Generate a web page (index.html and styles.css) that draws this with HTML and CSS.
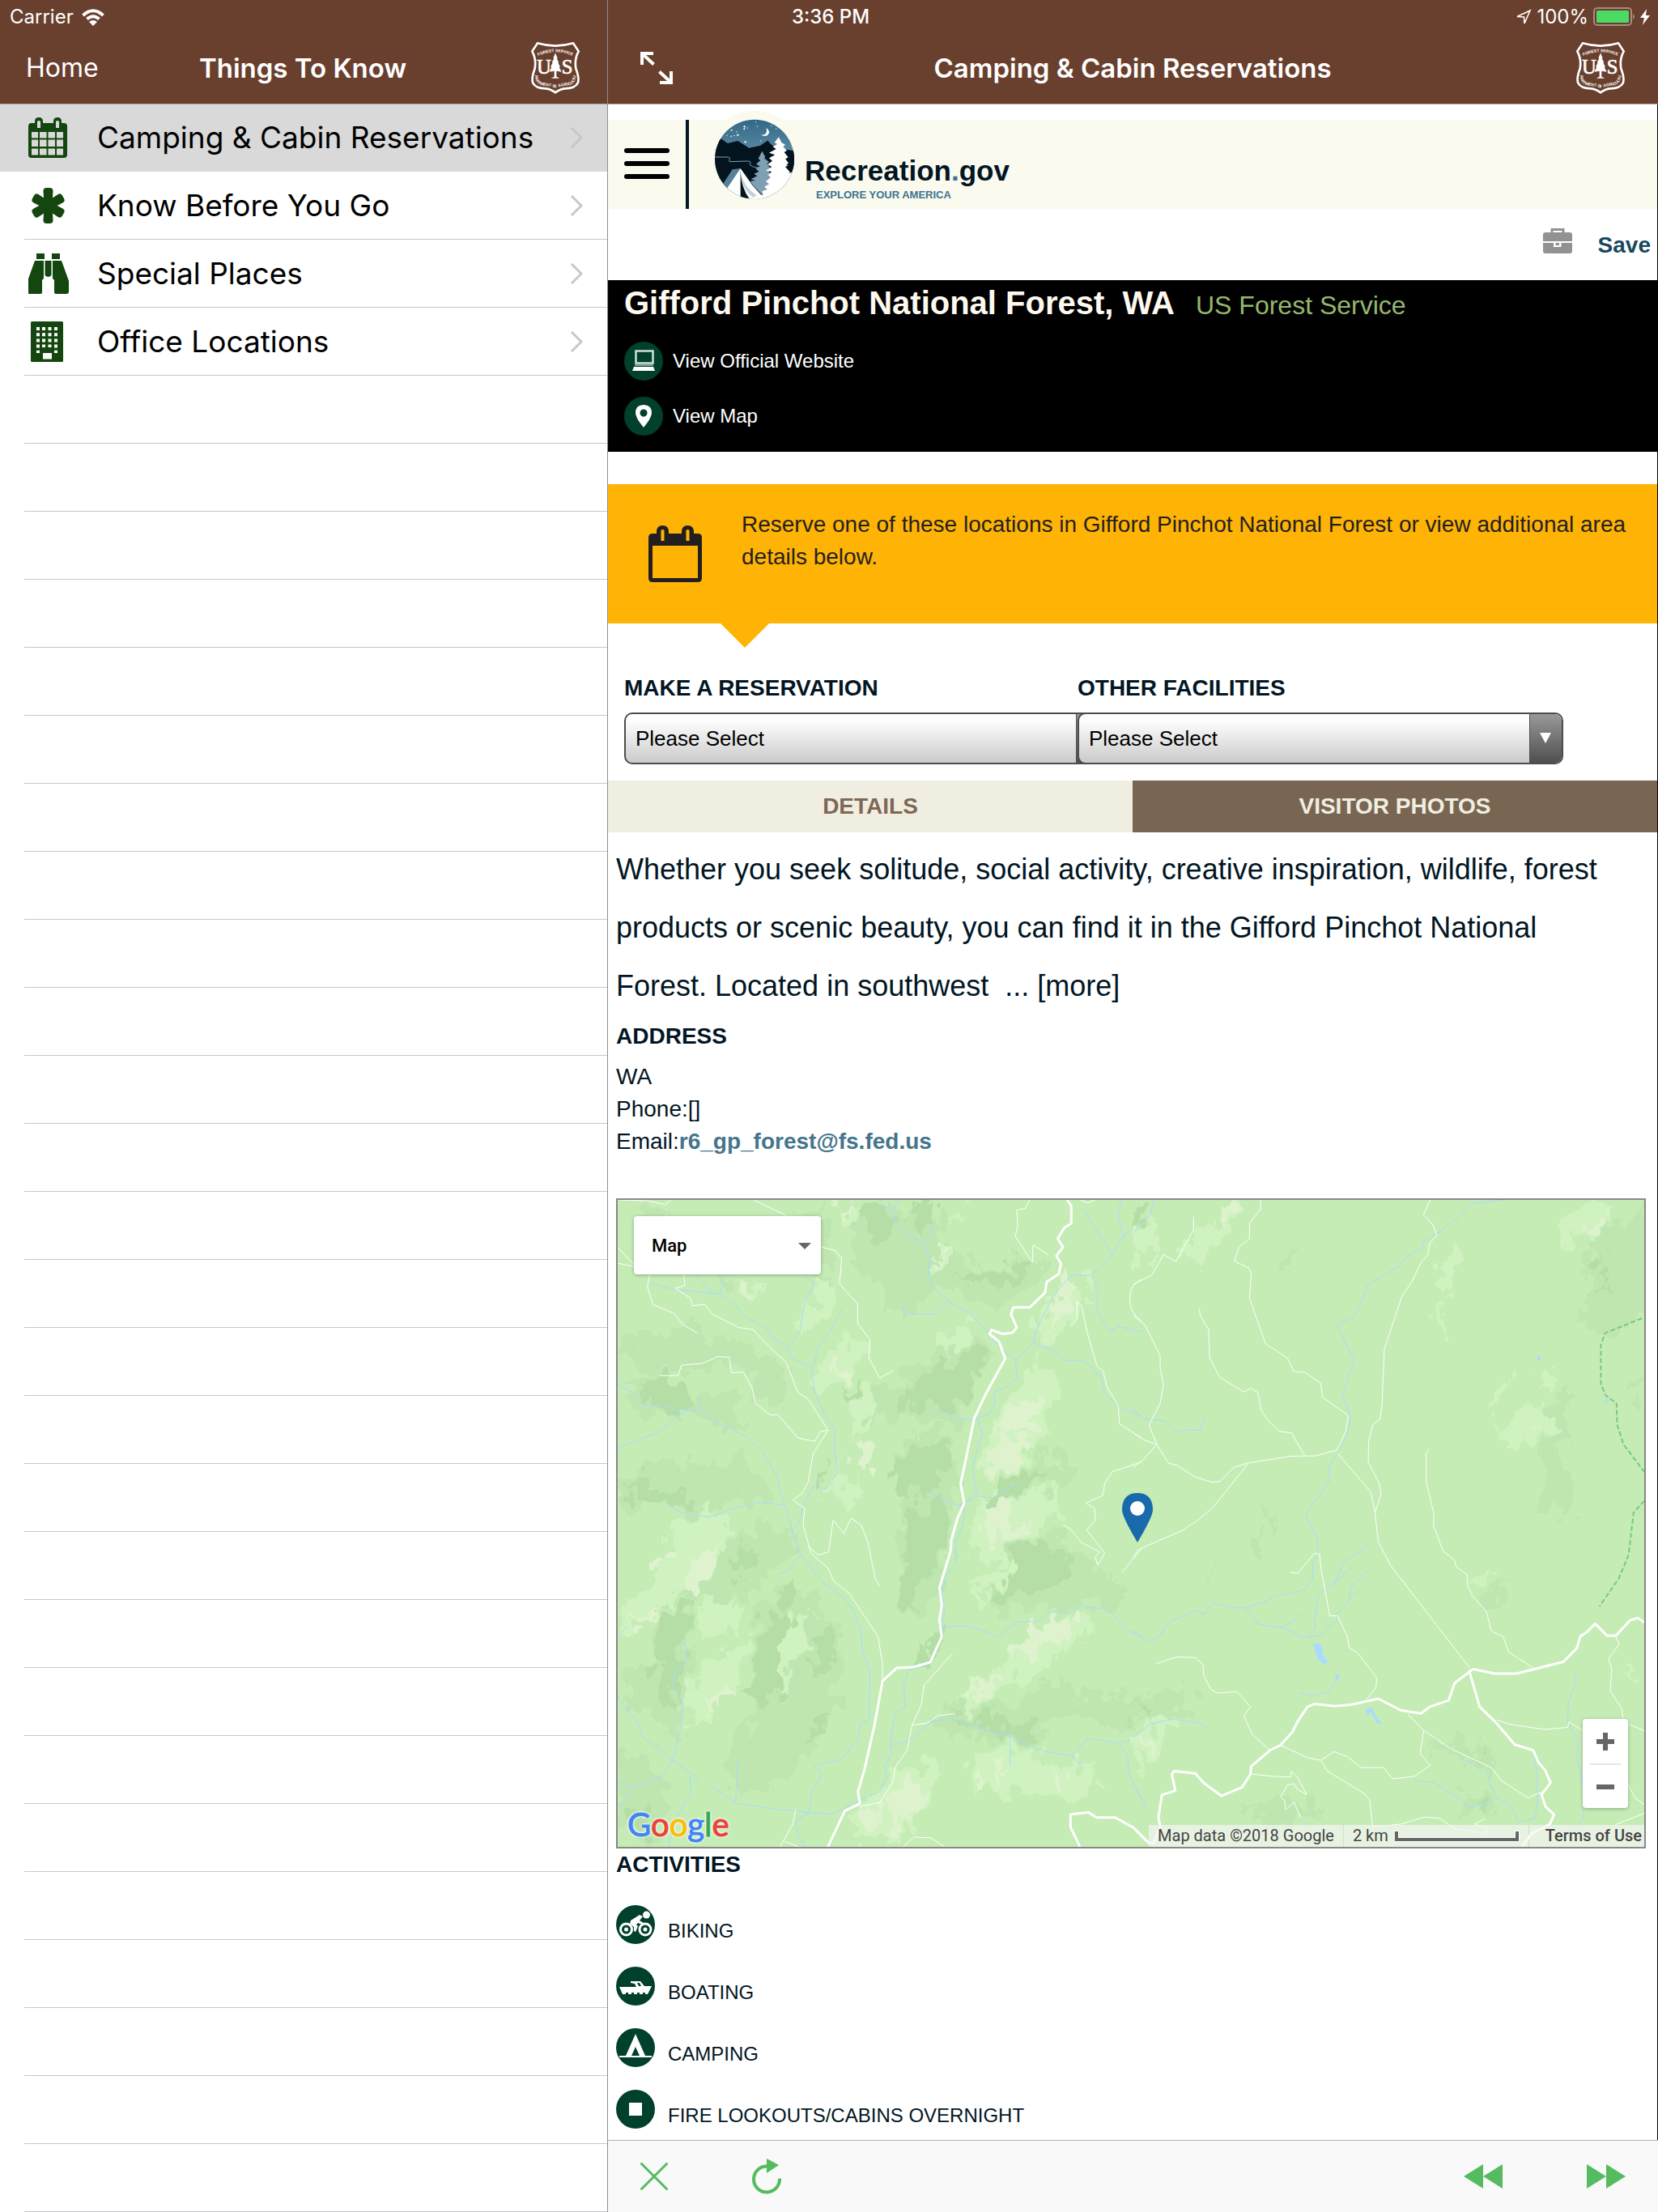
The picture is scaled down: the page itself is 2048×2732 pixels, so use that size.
FILE: index.html
```html
<!DOCTYPE html>
<html lang="en">
<head>
<meta charset="utf-8">
<meta name="viewport" content="width=device-width, initial-scale=1">
<title>Camping &amp; Cabin Reservations</title>
<link rel="stylesheet" href="styles.css">
</head>
<body>
<svg class="defs" width="0" height="0" aria-hidden="true">
  <defs>
    <symbol id="shield" viewBox="30 24 180 192">
      <path d="M54 28 Q120 48 186 28 L206 58 Q190 88 196 122 Q210 158 203 176 Q192 196 156 196 Q136 198 120 211 Q104 198 84 196 Q48 196 37 176 Q30 158 44 122 Q50 88 34 58 Z" fill="none" stroke="#fff" stroke-width="8"/>
      <path id="arc-top" d="M56 75 Q120 46 184 75" fill="none"/>
      <path id="arc-bottom" d="M44 146 Q44 182 78 185 Q106 188 120 194 Q134 188 162 185 Q196 182 196 146" fill="none"/>
      <text class="shield-small"><textPath href="#arc-top" startOffset="50%" text-anchor="middle">FOREST SERVICE</textPath></text>
      <text class="shield-small"><textPath href="#arc-bottom" startOffset="50%" text-anchor="middle">DEPARTMENT OF AGRICULTURE</textPath></text>
      <text class="shield-big" x="78" y="142" text-anchor="middle">U</text>
      <text class="shield-big" x="164" y="142" text-anchor="middle">S</text>
      <path d="M120 64 L128 84 L125 84 L133 100 L130 100 L138 116 L134 116 L143 134 L124 131 L124 152 L136 158 L104 158 L116 152 L116 131 L97 134 L106 116 L102 116 L110 100 L107 100 L115 84 L112 84 Z" fill="#fff"/>
    </symbol>
  </defs>
</svg>

<div class="app">
  <div class="status">
    <div class="status-left">
      <span>Carrier</span>
      <svg width="28" height="21" viewBox="0 0 28 21" fill="none" stroke="#fff" stroke-width="4"><path d="M1.500 8 Q14 -3.500 26.500 8"/><path d="M6.500 12.500 Q14 6 21.500 12.500"/><path d="M14 21 L9 16 Q14 12 19 16 Z" fill="#fff" stroke="none"/></svg>
    </div>
    <span class="clock">3:36 PM</span>
    <div class="status-right">
      <svg width="20" height="20" viewBox="0 0 20 20" fill="none" stroke="#fff" stroke-width="1.600"><path d="M18 2 L2 9.500 L10.500 10 L11 18 Z"/></svg>
      <span class="percent">100%</span>
      <svg width="52" height="24" viewBox="0 0 52 24"><rect x="1" y="1" width="46" height="21" rx="4" fill="none" stroke="#a68c82" stroke-width="2"/><rect x="4" y="4" width="40" height="15" rx="1.500" fill="#4cd964"/><path d="M49 8 Q53 11.500 49 15 Z" fill="#a68c82"/></svg>
      <svg width="12" height="20" viewBox="0 0 12 20"><path d="M8 0 L0 11 L5 11 L3 20 L12 8 L7 8 Z" fill="#fff"/></svg>
    </div>
  </div>

  <aside class="side">
    <header class="nav">
      <a class="nav-link" href="#home">Home</a>
      <h1 class="nav-title">Things To Know</h1>
      <svg class="nav-shield" role="img" aria-label="US Forest Service"><use href="#shield"/></svg>
    </header>
    <ul class="menu">
      <li class="menu-item is-current"><a class="menu-link" href="#camping">
        <svg class="menu-icon" viewBox="0 0 50 50"><path fill="#14460f" fill-rule="evenodd" d="M3 7 h5 v-2 q0-5 5-5 t5 5 v2 h13 v-2 q0-5 5-5 t5 5 v2 h3 q4 0 4 4 v35 q0 4-4 4 h-40 q-4 0-4-4 v-35 q0-4 4-4z M4 18 v7.500 h8 v-7.500z m10 0 v7.500 h8.500 v-7.500z m10.500 0 v7.500 h8.500 v-7.500z m10.500 0 v7.500 h8 v-7.500z M4 27.500 v8.500 h8 v-8.500z m10 0 v8.500 h8.500 v-8.500z m10.500 0 v8.500 h8.500 v-8.500z m10.500 0 v8.500 h8 v-8.500z M4 38.500 v8 h8 v-8z m10 0 v8 h8.500 v-8z m10.500 0 v8 h8.500 v-8z m10.500 0 v8 h8 v-8z M11 5 v8 h4 v-8 q-2-2-4 0z m23 0 v8 h4 v-8 q-2-2-4 0z"/></svg>
        <span class="menu-text">Camping &amp; Cabin Reservations</span>
        <svg class="chevron" viewBox="0 0 16 26"><path d="M2 1 L14 13 L2 25"/></svg></a></li>
      <li class="menu-item"><a class="menu-link" href="#know">
        <svg class="menu-icon" viewBox="0 0 50 50"><g stroke="#14460f" stroke-width="8" stroke-linejoin="round" fill="#14460f"><path d="M22.500 7 H26.500 L25.500 24 H23.500Z M22.500 43 H26.500 L25.500 26 H23.500Z"/><path d="M8.500 18 L10.500 14.500 L25 24 L24 26Z M40.500 18 L38.500 14.500 L24 24 L25 26Z M8.500 32 L10.500 35.500 L25 26 L24 24Z M40.500 32 L38.500 35.500 L24 26 L25 24Z"/></g></svg>
        <span class="menu-text">Know Before You Go</span>
        <svg class="chevron" viewBox="0 0 16 26"><path d="M2 1 L14 13 L2 25"/></svg></a></li>
      <li class="menu-item"><a class="menu-link" href="#places">
        <svg class="menu-icon" viewBox="0 0 50 50"><path fill="#14460f" d="M10 0 h10 v7 h-10z M29 0 h10 v7 h-10z M8 9 h11 v22 l-2 2 v15 q0 2-2 2 h-13 q-3 0-3-3 v-13z M30 9 h11 l9 25 v13 q0 3-3 3 h-13 q-2 0-2-2 v-15 l-2-2z M20.500 9 h8 v18 q-4 4-8 0z"/></svg>
        <span class="menu-text">Special Places</span>
        <svg class="chevron" viewBox="0 0 16 26"><path d="M2 1 L14 13 L2 25"/></svg></a></li>
      <li class="menu-item"><a class="menu-link" href="#offices">
        <svg class="menu-icon" viewBox="0 0 50 50"><rect x="3" y="0" width="40" height="50" rx="1.500" fill="#14460f"/><g stroke="#fff" stroke-width="4" stroke-dasharray="4 3.200"><path d="M12 7 V39" /><path d="M19 7 V32"/><path d="M26.500 7 V32"/><path d="M34 7 V39"/></g><rect x="18" y="39" width="11" height="7.500" fill="#fff"/></svg>
        <span class="menu-text">Office Locations</span>
        <svg class="chevron" viewBox="0 0 16 26"><path d="M2 1 L14 13 L2 25"/></svg></a></li>
    </ul>
    <div class="menu-rest"></div>
  </aside>

  <section class="detail">
    <header class="nav">
      <button class="icon-button expand" type="button" aria-label="Full screen">
        <svg width="40" height="40" viewBox="0 0 40 40" fill="none" stroke="#fff" stroke-width="4"><path d="M16 2 H2 V16 M3 3 L16.500 15.500"/><path d="M24 38 H38 V24 M37 37 L23.500 24.500"/></svg>
      </button>
      <h2 class="nav-title">Camping &amp; Cabin Reservations</h2>
      <svg class="nav-shield" role="img" aria-label="US Forest Service"><use href="#shield"/></svg>
    </header>

    <main class="page">
      <div class="brand-bar">
        <button class="icon-button burger" type="button" aria-label="Menu">
          <svg width="56" height="40" viewBox="0 0 56 40" stroke="#000" stroke-width="6" stroke-linecap="round"><path d="M3 3 H53 M3 19 H53 M3 35 H53"/></svg>
        </button>
        <a class="brand" href="#recreation">
          <svg class="brand-mark" viewBox="0 0 372 372" aria-hidden="true">
            <defs>
              <clipPath id="disc"><circle cx="186" cy="194" r="147"/></clipPath>
              <linearGradient id="sky" x1="0" y1="0" x2="0" y2="1"><stop offset="0" stop-color="#2f6687"/><stop offset="1" stop-color="#5f8ca4"/></linearGradient>
            </defs>
            <circle cx="186" cy="194" r="180" fill="#fafaee"/>
            <g clip-path="url(#disc)">
              <rect x="36" y="44" width="300" height="130" fill="url(#sky)"/>
              <path d="M36 140 L62 118 L86 135 L124 126 L166 152 L208 143 L234 125 L260 150 L340 165 V345 H36 Z" fill="#04141f"/>
              <path d="M70 284 L104 232 L134 228 L110 300 L84 305Z" fill="#55819a"/>
              <path d="M36 186 H90 Q100 189 92 196 L94 203 L160 201 Q178 202 168 212 Q172 222 200 226" fill="none" stroke="#7da0b4" stroke-width="3"/>
              <path d="M214 164 L226 186 L222 190 L240 205 L232 210 L246 230 L238 236 L250 262 L240 300 L216 328 L180 290 L170 275 L190 272 L172 268 L196 256 L184 248 L202 240 L190 228 L206 220 L192 212 L208 198 L200 192 Z" fill="#7f9fb2"/>
              <path d="M276 112 L286 132 L300 140 L292 148 L306 162 L296 168 L312 188 L300 192 L316 214 L300 222 L318 242 L345 250 V350 H140 L180 326 L218 326 L214 312 L234 306 L222 296 L240 286 L228 276 L246 262 L236 252 L250 240 L228 236 L250 222 L234 214 L252 200 L240 190 L262 178 L240 170 L266 156 L254 148 L270 138 L260 132 Z" fill="#fff"/>
              <path d="M310 160 L340 165 V215 L314 248 L322 222 L304 214 L316 206 L306 190 L318 182Z" fill="#04141f"/>
              <path d="M84 302 L134 228 L178 290 L212 328 V350 H90 Z" fill="#fff"/>
              <path d="M134 234 V336 L168 342 Q136 300 134 234Z" fill="#04141f"/>
              <path d="M136 250 Q142 310 182 336 L194 328 Q150 300 136 250Z" fill="#c3d2da"/>
              <path d="M230 78 Q248 92 234 105 Q224 112 210 104 Q236 106 230 78Z" fill="#fff"/>
              <g fill="#fff"><circle cx="149" cy="73" r="3.500"/><circle cx="148" cy="82" r="3"/><circle cx="160" cy="78" r="2"/><circle cx="101" cy="86" r="3"/><circle cx="120" cy="92" r="2"/><circle cx="124" cy="104" r="3.500"/><circle cx="111" cy="106" r="2"/><circle cx="100" cy="109" r="2.500"/><circle cx="84" cy="106" r="2"/><circle cx="152" cy="130" r="3.500"/><circle cx="191" cy="55" r="2"/><circle cx="209" cy="126" r="2"/><circle cx="196" cy="72" r="2"/><circle cx="266" cy="82" r="2"/><circle cx="248" cy="70" r="2"/></g>
            </g>
          </svg>
          <span class="brand-words">
            <span class="brand-name">Recreation<span class="brand-dot">.</span>gov</span>
            <span class="brand-tag">EXPLORE YOUR AMERICA</span>
          </span>
        </a>
      </div>

      <div class="save-row">
        <svg class="briefcase" viewBox="0 0 36 31" aria-hidden="true"><path d="M11 6 V1.500 H25 V6" fill="none" stroke="#929292" stroke-width="3"/><path d="M3 5 H33 Q36 5 36 8 V16 H0 V8 Q0 5 3 5Z M0 18 H13 V23 H22.500 V18 H36 V28 Q36 31 33 31 H3 Q0 31 0 28Z M15.500 18 H20 V21 H15.500Z" fill="#929292"/></svg>
        <a class="save" href="#save">Save</a>
      </div>

      <div class="facility">
        <div class="facility-head">
          <h3 class="facility-name">Gifford Pinchot National Forest, WA</h3>
          <span class="facility-org">US Forest Service</span>
        </div>
        <a class="facility-link" href="#website">
          <svg class="round-icon" viewBox="0 0 48 48"><circle cx="24" cy="24" r="24" fill="#00402c"/><rect x="14.500" y="11.500" width="21" height="15" fill="none" stroke="#cfe0d8" stroke-width="2.500"/><path d="M13 28 H36 V30 H13Z" fill="#7fa395"/><path d="M12 31 H36 L38 36 H10Z" fill="#fff"/></svg>
          View Official Website</a>
        <a class="facility-link" href="#map">
          <svg class="round-icon" viewBox="0 0 48 48"><circle cx="24" cy="24" r="24" fill="#00402c"/><path fill="#fff" fill-rule="evenodd" d="M24 10 Q34 10 34 20 Q34 26 24 38 Q14 26 14 20 Q14 10 24 10Z M24 15.500 a4.500 4.500 0 1 0 .01 0Z"/></svg>
          View Map</a>
      </div>

      <div class="notice">
        <svg width="66" height="70" viewBox="0 0 66 70" aria-hidden="true"><path fill="#231f20" fill-rule="evenodd" d="M5 10 H10 V8 Q10 0 17.500 0 T25 8 V10 H41 V8 Q41 0 48.500 0 T56 8 V10 H61 Q66 10 66 15 V65 Q66 70 61 70 H5 Q0 70 0 65 V15 Q0 10 5 10Z M5 25 V65 H61 V25Z M15.500 6 V19 H19.500 V6 Q17.500 4 15.500 6Z M46.500 6 V19 H50.500 V6 Q48.500 4 46.500 6Z"/></svg>
        <p class="notice-text">Reserve one of these locations in Gifford Pinchot National Forest or view additional area details below.</p>
      </div>

      <form class="pickers">
        <div class="picker">
          <label class="heading" for="reservation">MAKE A RESERVATION</label>
          <div class="select-box"><select id="reservation"><option>Please Select</option></select></div>
        </div>
        <div class="picker">
          <label class="heading" for="facilities">OTHER FACILITIES</label>
          <div class="select-box"><select id="facilities"><option>Please Select</option></select></div>
        </div>
      </form>

      <div class="tabs">
        <button class="tab is-active" type="button">DETAILS</button>
        <button class="tab" type="button">VISITOR PHOTOS</button>
      </div>

      <div class="body">
        <p class="about">Whether you seek solitude, social activity, creative inspiration, wildlife, forest products or scenic beauty, you can find it in the Gifford Pinchot National Forest. Located in southwest&nbsp; ... <a href="#more">[more]</a></p>
        <h4 class="heading section">ADDRESS</h4>
        <address class="address">WA<br>Phone:[]<br>Email:<a class="mail" href="mailto:r6_gp_forest@fs.fed.us">r6_gp_forest@fs.fed.us</a></address>

        <div class="map">
          <svg class="map-art" viewBox="0 0 1268 799" preserveAspectRatio="xMidYMid slice" role="img" aria-label="Map of the forest">
            <defs>
              <!-- breaks the contour edges up like real relief shading -->
              <filter id="relief" x="-5%" y="-5%" width="110%" height="110%" color-interpolation-filters="sRGB">
                <feTurbulence type="fractalNoise" baseFrequency="0.022" numOctaves="3" seed="7" result="noise"/>
                <feDisplacementMap in="SourceGraphic" in2="noise" scale="110" xChannelSelector="R" yChannelSelector="G"/>
              </filter>
            </defs>
            <rect width="1268" height="799" fill="#c5ecb5"/>
            <!-- west half -->
            <g transform="translate(-13 -22) scale(.4209 .5357)">
              <g fill="#bfe6b0" filter="url(#relief)">
                <path d="M735 50 L840 60 L960 60 L1000 90 L990 160 L1080 190 L1060 240 L960 250 L900 300 L820 290 L800 230 L740 200 L700 140Z"/>
                <path d="M960 400 L1090 350 L1130 400 L1080 470 L1020 560 L930 560 L850 530 L760 560 L740 510 L860 460Z"/>
                <path d="M840 640 L900 590 L1020 570 L1040 640 L1020 760 L1000 860 L960 960 L910 1010 L860 990 L850 860 L870 740Z"/>
                <path d="M31 360 L180 350 L260 330 L380 370 L500 420 L540 500 L470 520 L400 430 L300 420 L200 450 L80 430Z"/>
                <path d="M31 470 L120 440 L220 480 L380 490 L410 560 L330 560 L220 520 L100 540Z"/>
                <path d="M60 680 L180 640 L280 650 L400 640 L460 680 L500 720 L380 750 L240 770 L140 740 L31 760 L31 700Z"/>
                <path d="M360 830 L450 780 L540 810 L560 850 L480 900 L420 960 L330 970 L230 950 L140 990 L140 940 L260 880Z"/>
                <path d="M130 1010 L240 960 L250 1100 L220 1200 L210 1290 L130 1240 L60 1200 L40 1130 L140 1100Z"/>
                <path d="M440 980 L560 920 L620 980 L690 1040 L690 1130 L650 1250 L600 1330 L480 1400 L380 1410 L340 1330 L420 1240Z"/>
                <path d="M1130 900 L1200 830 L1300 810 L1390 850 L1440 900 L1530 930 L1500 970 L1330 980 L1220 990 L1120 980Z"/>
                <path d="M930 1250 L1030 1210 L1190 1200 L1290 1150 L1420 1180 L1530 1180 L1568 1230 L1500 1260 L1340 1230 L1260 1300 L1120 1280 L1000 1270Z"/>
                <path d="M31 1300 L120 1350 L180 1410 L160 1500 L90 1530 L31 1480Z"/>
                <path d="M560 60 L640 45 L660 150 L640 230 L600 200Z"/>
                <path d="M1020 180 L1150 190 L1260 170 L1290 210 L1210 260 L1120 290 L1030 250Z"/>
                <path d="M1120 720 L1200 670 L1280 620 L1340 640 L1390 660 L1360 700 L1230 700 L1150 760Z"/>
                <path d="M80 60 L160 50 L200 90 L120 110Z M430 130 L500 100 L540 150 L470 190Z M310 200 L380 230 L340 260Z"/>
              </g>
              <g fill="#cff2c0" filter="url(#relief)">
                <path d="M600 440 L700 360 L760 370 L740 430 L680 480 L640 490Z"/>
                <path d="M730 500 L800 470 L780 540 L700 600 L690 700 L760 690 L720 740 L640 720 L690 640Z"/>
                <path d="M1110 600 L1200 450 L1290 420 L1340 480 L1290 560 L1230 640 L1150 690 L1090 660Z"/>
                <path d="M1090 720 L1220 720 L1340 700 L1320 760 L1220 830 L1140 880 L1080 850Z"/>
                <path d="M1250 330 L1330 250 L1420 220 L1420 270 L1340 350 L1270 370Z"/>
                <path d="M60 970 L150 900 L200 800 L280 760 L370 790 L340 870 L220 940 L120 1010 L31 1050 L31 1000Z"/>
                <path d="M230 1170 L340 1080 L420 1060 L400 1130 L300 1220 L240 1260Z"/>
                <path d="M250 1000 L330 960 L400 980 L380 1030 L290 1060Z M500 1060 L540 1000 L590 990 L560 1110 L510 1170Z"/>
                <path d="M1030 1180 L1150 1100 L1300 1020 L1420 990 L1420 1040 L1300 1100 L1180 1170 L1040 1210Z"/>
                <path d="M700 1470 L780 1420 L840 1360 L940 1340 L990 1370 L920 1440 L900 1500 L760 1530Z"/>
                <path d="M1060 1330 L1150 1300 L1260 1320 L1350 1340 L1430 1350 L1460 1400 L1330 1430 L1200 1410 L1080 1400Z"/>
                <path d="M630 230 L680 220 L650 300 L620 320 L560 330Z M680 60 L760 45 L720 100Z M1000 80 L1060 60 L1030 110Z M940 190 L1010 150 L1010 190Z"/>
                <path d="M980 370 L1060 330 L1070 360 L990 400Z M1060 930 L1150 880 L1200 880 L1110 970Z M380 250 L450 220 L430 270Z"/>
              </g>
              <g fill="#b5dea7" filter="url(#relief)">
                <path d="M735 60 L800 50 L840 90 L830 130 L780 140 L740 110Z"/>
                <path d="M905 45 L955 45 L955 110 L910 110 L880 80Z"/>
                <path d="M1020 220 L1090 200 L1200 190 L1265 180 L1230 215 L1150 250 L1080 230Z"/>
                <path d="M990 430 L1060 380 L1110 390 L1090 440 L1070 500 L1010 530 L960 500 L900 520 L850 510 L870 480Z"/>
                <path d="M840 660 L900 610 L1020 590 L1020 650 L960 690 L900 730 L840 720Z"/>
                <path d="M870 770 L960 740 L1010 750 L990 850 L960 900 L900 950 L880 1005 L855 960 L870 850Z"/>
                <path d="M90 480 L160 455 L260 490 L250 520 L180 520 L110 500Z"/>
                <path d="M50 720 L110 670 L120 710 L220 720 L250 740 L130 745Z"/>
                <path d="M170 1000 L240 955 L230 1060 L200 1130 L215 1215 L180 1190 L140 1150 L145 1060Z"/>
                <path d="M460 1000 L530 990 L520 1080 L500 1180 L460 1210 L410 1170 L440 1120Z"/>
                <path d="M510 940 L555 920 L565 960 L530 990Z"/>
                <path d="M600 1060 L660 1030 L680 1080 L640 1130 L600 1110Z"/>
                <path d="M950 1070 L970 1000 L985 1050 L950 1110 L900 1080Z"/>
                <path d="M1210 850 L1260 820 L1310 840 L1370 860 L1350 920 L1260 930 L1180 960 L1130 960 L1180 900Z"/>
                <path d="M1000 1235 L1120 1225 L1260 1265 L1240 1290 L1120 1265Z"/>
                <path d="M1120 740 L1160 690 L1250 660 L1290 670 L1200 710 L1150 740Z"/>
                <path d="M600 700 L640 650 L620 720Z M350 890 L420 840 L450 870 L380 910Z M700 490 L740 470 L740 500Z"/>
                <path d="M60 1460 L120 1440 L130 1490 L80 1510Z M600 1240 L650 1210 L640 1260 L590 1300Z"/>
              </g>
              <g fill="#def2cd" filter="url(#relief)">
                <path d="M1120 640 L1180 590 L1250 580 L1265 600 L1180 660 L1120 685Z"/>
                <path d="M1130 580 L1200 510 L1280 490 L1280 530 L1200 570Z"/>
                <path d="M1300 290 L1340 240 L1385 225 L1370 260 L1320 330 L1290 345Z"/>
                <path d="M1110 740 L1190 735 L1170 770 L1230 800 L1180 850 L1130 830Z"/>
                <path d="M1180 1090 L1290 1010 L1370 1000 L1360 1050 L1220 1090Z M1035 1180 L1130 1130 L1160 1140 L1090 1190Z"/>
                <path d="M240 930 L260 870 L330 830 L310 890 L270 940Z M150 890 L180 820 L190 870Z M50 1030 L170 980 L150 1010Z"/>
                <path d="M640 440 L700 410 L730 430 L690 450Z M730 600 L790 600 L770 660 L730 660Z M670 60 L720 50 L700 75Z"/>
                <path d="M825 1410 L880 1380 L930 1400 L890 1480 L840 1500Z M750 1460 L800 1440 L800 1480 L760 1500Z M1085 1330 L1100 1390 L1080 1410Z M1150 1330 L1170 1370 L1140 1410Z M1270 1340 L1350 1370 L1340 1390Z"/>
                <path d="M290 1200 L350 1160 L380 1160 L320 1215Z M400 250 L440 230 L420 260Z M960 180 L1000 160 L990 180Z"/>
              </g>
              <g class="stream">
                <path d="M800 41 L815 58 L838 68 L845 95 L885 122 L935 148 L947 180 L942 212 L955 240 L1000 274 L1060 300 L1110 340 L1150 378 L1198 411 L1204 450 L1180 468 L1135 485 L1138 510 L1120 535 L1085 545 L1102 580 L1085 620 L1072 655 L1078 690 L1085 715 L1050 740 L1045 790 L1022 830 L1025 880 L995 905 L982 950 L990 985 L980 1050 L950 1110 L885 1125 L870 1160 L875 1210 L845 1225 L830 1297 L838 1315 L815 1345 L820 1370 L800 1405 L740 1425 L660 1458 L592 1453"/>
                <path d="M872 283 L872 303 L920 305 L965 305 L1000 274 M838 68 L855 41 M925 142 L957 120 L957 95"/>
                <path d="M120 232 L200 248 L330 258 L372 282 L415 315 L470 338 L478 352 L530 382 L540 405 L600 425 L607 480 L640 540 L668 570 L668 620 L678 670 L640 708 L605 702 L585 730 L560 790 L543 805"/>
                <path d="M258 212 L312 258 M348 212 L330 258 M530 382 L565 345 L580 275 L608 234 L575 215 M605 425 L620 380 L660 335 L690 292"/>
                <path d="M1200 411 L1250 370 L1268 325 L1310 262 L1360 215 L1420 215 L1480 170 L1515 123 L1568 95 M1398 66 L1440 115 L1485 168 M1515 123 L1500 80 L1508 41"/>
                <path d="M1250 370 L1310 388 L1350 412 L1400 412 L1450 450 L1460 485 L1502 518 L1568 540 M1420 215 L1440 240 L1438 300 L1475 345 L1500 333 L1568 345"/>
                <path d="M31 468 L75 485 L105 514 L170 517 L225 528 L272 526 L268 495 M225 530 L150 577 L100 592 L31 612"/>
                <path d="M288 541 L350 566 L405 585 L460 625 L500 680 L508 715 L535 775 L543 805 L567 858 L590 880 L630 920 L690 955 L722 985 L745 1040 L750 1085 L772 1130 L768 1240 L742 1250 L738 1282 L690 1330 L608 1345 L630 1365 L600 1410 L592 1453 L555 1472 L560 1505 L580 1532"/>
                <path d="M165 735 L218 763 L300 772 L370 752 L450 738 L522 745 M500 905 L530 895 L567 860 M945 714 L1000 738 L1045 747 M978 526 L1020 545 L1085 548 M1050 740 L1085 724 L1130 728 L1204 694"/>
                <path d="M980 1030 L1035 1022 L1090 1030 L1150 1048 L1200 1014 L1270 1012 L1300 990 L1360 993 L1392 976 L1470 987 L1530 1035 L1568 1050"/>
                <path d="M228 1052 L235 1100 L200 1130 L192 1160 L222 1200 L215 1260 L193 1333 M31 1190 L85 1240 L105 1280 L193 1333 L272 1380 M31 1380 L70 1397 L160 1370 L193 1333 M70 1397 L31 1450 M304 1392 L380 1433 L510 1447 L592 1453 M382 1336 L377 1430 M243 1370 L245 1410 L200 1470 L180 1532 M31 1047 L60 1025"/>
                <path d="M830 1297 L880 1290 L950 1245 L1010 1235 L1070 1252 L1140 1272 L1182 1277 L1280 1312 L1365 1323 L1408 1283 L1500 1293 L1568 1280 M1182 1277 L1182 1343 M1365 1323 L1400 1355 M1500 1293 L1527 1320 L1530 1360 L1548 1395 L1568 1420"/>
              </g>
              <g class="track">
                <path d="M31 41 L120 43 L170 52 L188 41 M430 41 L480 60 L520 75 L560 100 L630 150 L670 158 L688 176 L682 235 L735 280 L735 325 L772 365 L768 405 L800 452 L840 434"/>
                <path d="M31 150 L78 190 L125 212 L118 242 L135 283 L195 302 L222 328 L264 348 M31 187 L78 195 M225 212 L228 238 L200 245 L245 268 L250 285 L285 282 L310 305 L385 335 L428 340 L480 383 L525 415 L560 485 L590 500 L648 572 L605 625 L590 690 L572 718 L545 733 L580 752 L575 790 L598 855 L648 890 L665 920 L710 948 L795 1048 L808 1110 L808 1150"/>
                <path d="M152 446 L208 446 L218 422 L280 418 L325 402 L358 404 L365 440 L400 438 L425 475 L435 510 L480 538 L500 535 L560 590 L610 598 L625 575 L648 572"/>
                <path d="M590 840 L620 860 L650 852 L663 780 L695 810 L715 775 L745 790 L765 830 L787 915 L800 932 M1013 1087 L930 1160 L922 1205 L895 1252 L880 1310 L845 1350 L838 1385 L800 1430 L740 1440 M895 1252 L940 1247 L970 1230 L1018 1226"/>
                <path d="M1240 41 L1228 60 L1202 65 L1205 100 L1198 125 L1248 185 L1250 145 L1295 168 M1360 333 L1380 315 L1378 275 L1392 285 L1410 350 L1438 425 L1455 435 L1468 475 L1500 515 L1503 557 L1568 590 M1388 41 L1410 48 L1432 41"/>
                <path d="M1568 645 L1482 668 L1460 695 L1455 722 L1405 740 L1430 752 L1433 780 L1407 802 L1460 855 L1440 883 L1432 865 L1445 853 L1390 830 L1360 800 L1338 791 M1513 898 L1568 845 M553 1447 L545 1480 L508 1532 M520 1520 L560 1532 M870 1532 L900 1510 L950 1512 L990 1532"/>
                <path d="M1568 225 Q1532 235 1534 270 Q1532 300 1568 320"/>
              </g>
              <g class="road">
                <path d="M1350 41 L1362 55 L1362 95 L1342 105 L1322 130 L1338 150 L1318 170 L1332 188 L1325 212 L1290 230 L1285 255 L1240 289 L1192 289 L1185 305 L1202 335 L1190 347 L1160 350 L1128 341 L1122 350 L1150 368 L1168 407 L1110 490 L1077 545 L1050 650 L1037 695 L1048 740 L1028 775 L1010 825 L1008 850 L975 935 L982 975 L975 1010 L982 1048 L948 1107 L900 1118 L850 1120 L808 1150 L785 1250 L755 1355 L736 1405 L742 1433 L697 1450 L648 1532"/>
              </g>
            </g>
            <!-- east half -->
            <g transform="translate(637 -22) scale(.41327 .5357)">
              <g fill="#bfe6b0" filter="url(#relief)">
                <path d="M1370 130 L1440 90 L1560 60 L1560 300 L1440 340 L1380 340 L1320 300 L1380 240 L1360 190Z"/>
                <path d="M440 180 L480 150 L475 190 L450 200Z M385 800 L410 755 L410 790 L380 830 L390 860 L340 860Z M205 920 L260 880 L235 915Z M1040 940 L1130 930 L1080 975 L1040 970Z"/>
                <path d="M1230 560 L1270 480 L1308 475 L1308 560 L1270 620 L1310 690 L1310 760 L1250 765 L1200 730 L1240 690 L1210 640Z M1450 490 L1527 455 L1527 480 L1480 500Z"/>
                <path d="M0 1190 L80 1170 L175 1170 L185 1230 L100 1240 L0 1250Z M900 1290 L1000 1290 L1080 1320 L1060 1350 L930 1320Z M310 1450 L400 1430 L540 1430 L560 1460 L430 1470Z M980 1410 L1090 1410 L1080 1450 L990 1460Z"/>
              </g>
              <g fill="#cff2c0" filter="url(#relief)">
                <path d="M900 250 L930 160 L970 145 L965 200 L930 255Z M900 330 L920 270 L955 260 L930 310 L930 345Z M1060 520 L1070 480 L1130 450 L1120 490Z M1090 570 L1160 520 L1240 510 L1250 560 L1180 610 L1120 615Z M1190 460 L1240 435 L1275 455 L1230 485Z"/>
                <path d="M1250 120 L1300 80 L1370 45 L1440 60 L1370 130 L1290 130Z M1000 910 L1090 895 L1060 920 L1020 935Z M0 90 L70 95 L60 160 L0 200Z M130 160 L200 120 L290 50 L330 45 L280 110 L190 180Z M0 1290 L90 1240 L130 1245 L50 1320 L0 1350Z M1465 1130 L1495 1140 L1480 1155Z"/>
              </g>
              <g fill="#b5dea7" filter="url(#relief)"><path d="M0 70 L60 45 L40 80 L0 110Z M1370 180 L1390 140 L1400 200Z M1400 230 L1430 210 L1410 250Z M985 1305 L1060 1325 L1010 1325Z M1010 1440 L1060 1425 L1060 1450Z M0 1220 L70 1195 L60 1235Z"/></g>
              <g fill="#def2cd" filter="url(#relief)"><path d="M255 90 L265 55 L310 45 L280 95Z M1350 110 L1420 80 L1400 110 L1370 120Z M0 1300 L60 1275 L30 1310Z M1185 555 L1200 560 L1195 575Z"/></g>
              <g fill="#aadaff"><path d="M537 1063 L562 1066 L567 1090 L582 1106 L570 1112 L548 1095Z M1205 407 L1218 398 L1214 415Z M1408 512 L1412 500 L1420 507Z M602 1137 L620 1136 L606 1150Z M694 1215 L712 1212 L732 1240 L745 1248 L728 1248 L710 1222 L696 1230Z"/></g>
              <g class="stream">
                <path d="M1100 41 L1010 50 L960 88 L905 120 L870 135 L862 152 L820 170 L795 193 L700 238 L675 290 L655 312 L610 328 L635 375 L662 410 L640 455 L625 490 L650 542 L640 580 L610 625 L585 655 L583 692 L515 765 L548 820 L552 855 L536 875 L536 915 L510 940 L415 957 L395 967 L335 982 L290 980 L238 970 L212 997 L185 988 L105 1015 L80 1045 L40 1062 L15 1040 L0 1037"/>
                <path d="M335 982 L375 1020 L440 1026 L515 1050 L560 1046 L607 1010 L610 995 L645 965 L650 935 L703 895 M440 1026 L475 1015 L500 992 M530 1046 L542 1030 L545 985 L552 953 L600 925 L655 887 M600 925 L630 875 L700 838 M648 955 L670 945 M497 1177 L535 1185 L580 1175 L606 1150"/>
                <path d="M0 525 L35 547 L95 550 L125 573 L200 572 L211 545 M60 41 L52 75 L0 118 M0 1280 L50 1250 L115 1238 L190 1245 L220 1258 M1320 1136 L1322 1155 L1300 1200 L1298 1247 L1330 1290 L1325 1330 L1345 1390 L1345 1465 L1310 1500"/>
                <path d="M840 1380 L900 1385 L960 1415 L1010 1442 L1060 1432 L1090 1420 L1065 1390 L1060 1368 L1010 1340 L975 1328 M1090 1420 L1130 1440 L1150 1474 L1200 1468 L1208 1430 L1205 1360 L1195 1310 L1140 1297 L1105 1265 M0 1390 L30 1425 L37 1445 M510 1475 L520 1490"/>
              </g>
              <g class="track">
                <path d="M380 41 L380 62 L347 95 L347 130 L315 150 L302 182 L345 198 L352 210 L347 268 L395 373 L430 390 L460 405 L480 437 L512 438 L560 464 L565 496 L642 538 L635 575 L608 618 L545 631 L470 632 L340 648 L300 658 L258 690 L235 692 L185 680 L130 653 L105 648 L70 605 L47 560 L80 510 L90 468 L80 430 L80 400 L35 330 L0 308"/>
                <path d="M197 292 L200 308 L225 340 L228 405 L258 450 L330 484 L352 475 L372 485 L382 525 L400 548 L438 575 L472 578 L512 631 M343 649 L240 748 L200 775 L150 802 L15 847 L0 865 M0 236 L55 214 L90 167 L127 183 L180 110 L180 80 M0 578 L30 594 L70 605 L30 640 L0 658"/>
                <path d="M887 41 L867 75 L895 98 L907 122 L885 142 L880 168 L860 185 L832 230 L803 262 L750 385 L743 515 L737 545 L715 560 L703 598 L702 645 L735 695 L740 720 L722 762 L732 830 L770 885 L1005 1120 M610 625 L710 715 L722 762"/>
                <path d="M885 615 L875 625 L875 690 L898 765 L897 792 L925 850 L960 872 L965 887 L997 905 L1000 932 L1012 953 L1055 990 L1070 1035 L1105 1048 L1122 1084 L1195 1120 M470 900 L492 901 L540 857 L556 857 L562 898 L587 1000 L610 1000 L640 1048 L645 1074 L670 1085 L727 1143 L725 1165 L698 1192"/>
                <path d="M68 1110 L130 1095 L185 1096 L208 1112 L210 1138 L232 1170 L250 1178 L310 1175 L350 1210 L330 1230 L355 1273 L408 1310 M440 1298 L520 1327 L560 1333 L600 1313 L640 1325 L680 1350 L748 1350 L775 1376 L840 1370 L887 1345 L857 1318 L868 1264 L820 1227 M868 1264 L950 1307 L1070 1350 L1100 1380 L1180 1420 L1220 1406"/>
                <path d="M560 1333 L580 1358 L690 1410 L706 1423 L715 1487 L800 1480 L870 1464 L915 1467 L960 1490 L1055 1503 L1058 1490 L1020 1480 L1050 1468 M355 1365 L418 1370 L470 1372 L472 1358 L490 1372 L518 1412 L490 1400 L480 1387 L460 1390 L440 1418 L452 1425 L455 1447 L480 1430 L500 1465"/>
                <path d="M1085 1240 L1125 1250 L1230 1262 L1298 1257 L1302 1245 L1345 1265 M1440 1045 L1452 1065 L1420 1100 L1430 1122 L1425 1172 L1460 1215 L1465 1245 L1527 1265 M1478 1388 L1500 1420 L1527 1435 M1527 1455 L1440 1482"/>
              </g>
              <g class="road">
                <path d="M1527 1015 L1508 1005 L1485 1010 L1442 1046 L1416 1046 L1380 1018 L1355 1038 L1336 1047 L1325 1075 L1285 1106 L1145 1133 L1080 1133 L1015 1123 L960 1155 L942 1195 L885 1210 L860 1225 L800 1218 L732 1191 L650 1205 L600 1208 L542 1203 L520 1210 L490 1245 L475 1268 L440 1298 L408 1310 L352 1347 L350 1365 L325 1395 L263 1415 L210 1385 L185 1363 L122 1358 L115 1365 L125 1403 L85 1413 L75 1465 L80 1485 L60 1525 L45 1523 L0 1488 L-55 1465 L-110 1465 L-135 1453 L-188 1458 L-188 1487 L-160 1532"/>
                <path d="M1003 1125 L1035 1210 L1080 1243 L1140 1297 L1195 1310 L1210 1337 L1230 1355 L1247 1385 L1220 1412 L1232 1440 L1257 1458 L1245 1480 L1190 1502 L1162 1532"/>
              </g>
              <g class="trail">
                <path d="M1520 314 L1410 348 L1397 375 L1397 465 L1412 492 L1444 510 L1446 560 L1465 605 L1527 668"/>
                <path d="M1527 735 L1495 762 L1480 860 L1450 915 L1393 978"/>
              </g>
            </g>
          </svg>
          <svg class="map-pin" viewBox="0 0 38 62" aria-hidden="true"><path fill="#196aac" fill-rule="evenodd" d="M19 0 Q38 0 38 21 Q38 29 19 61 Q0 29 0 21 Q0 0 19 0Z"/><circle cx="19" cy="19" r="9" fill="#fff"/></svg>
          <div class="map-type">
            <select aria-label="Map type"><option>Map</option></select>
          </div>
          <div class="map-zoom">
            <button type="button" aria-label="Zoom in"><svg width="22" height="22" viewBox="0 0 22 22"><path d="M0 11 H22 M11 0 V22" stroke="#666" stroke-width="6"/></svg></button>
            <button type="button" aria-label="Zoom out"><svg width="22" height="22" viewBox="0 0 22 22"><path d="M0 11 H22" stroke="#666" stroke-width="6"/></svg></button>
          </div>
          <a class="google" href="#google"><span class="g-blue">G</span><span class="g-red">o</span><span class="g-yellow">o</span><span class="g-blue">g</span><span class="g-green">l</span><span class="g-red">e</span></a>
          <div class="map-credit">
            <span>Map data ©2018 Google</span>
            <span class="scale">2 km <svg width="154" height="14" viewBox="0 0 154 14"><path d="M2 0 V11 H151 V0" fill="none" stroke="#fff" stroke-width="6"/><path d="M2 1 V11 H151 V1" fill="none" stroke="#666" stroke-width="4"/></svg></span>
            <a class="terms" href="#terms">Terms of Use</a>
          </div>
        </div>

        <h4 class="heading">ACTIVITIES</h4>
        <ul class="activities">
          <li><svg class="round-icon" viewBox="0 0 48 48"><circle cx="24" cy="24" r="24" fill="#00402c"/><g fill="none" stroke="#fff" stroke-width="3"><circle cx="12.500" cy="30" r="7"/><circle cx="36" cy="30" r="7"/></g><circle cx="12.500" cy="30" r="2.500" fill="#fff"/><circle cx="36" cy="30" r="2.500" fill="#fff"/><circle cx="37.500" cy="12" r="4.500" fill="#fff"/><path d="M18 19 L29 12 L33 14 L29 19 L34 22 L32 24 L27 22 L25 24 L27 26 L24 33 L22 32 L22 27 L17 23Z" fill="#fff"/></svg><span>BIKING</span></li>
          <li><svg class="round-icon" viewBox="0 0 48 48"><circle cx="24" cy="24" r="24" fill="#00402c"/><path d="M4 25 H25 L23 21 L18 20 V18 H30 L35 24 H44 L39 34 H36 V32 H33 V34 H29 V32 H26 V34 H22 V32 H19 V34 H15 V32 H12 V34 H8Z" fill="#fff"/><path d="M26 20 L29 20 L31 24 H28Z" fill="#00402c"/></svg><span>BOATING</span></li>
          <li><svg class="round-icon" viewBox="0 0 48 48"><circle cx="24" cy="24" r="24" fill="#00402c"/><path fill="#fff" fill-rule="evenodd" d="M24 7 L36 34 H44 V36 H4 V34 H12Z M24 23 L19 34 H29Z"/></svg><span>CAMPING</span></li>
          <li><svg class="round-icon" viewBox="0 0 48 48"><circle cx="24" cy="24" r="24" fill="#00402c"/><rect x="16" y="16" width="16" height="16" fill="#fff"/></svg><span>FIRE LOOKOUTS/CABINS OVERNIGHT</span></li>
        </ul>
      </div>
    </main>

    <footer class="toolbar">
      <button class="icon-button" type="button" aria-label="Close"><svg width="34" height="34" viewBox="0 0 34 34" stroke="#55bb60" stroke-width="3" stroke-linecap="round"><path d="M1.500 1.500 L32.500 32.500 M32.500 1.500 L1.500 32.500"/></svg></button>
      <button class="icon-button reload" type="button" aria-label="Reload"><svg width="36" height="44" viewBox="0 0 36 44"><path d="M18 9.500 A16 16 0 1 0 34 24.500" fill="none" stroke="#55bb60" stroke-width="4"/><path d="M18 0 L33 8 L18 18Z" fill="#55bb60"/></svg></button>
      <button class="icon-button back" type="button" aria-label="Back"><svg width="48" height="30" viewBox="0 0 48 30" fill="#55bb60"><path d="M0 15 L24 0 V30Z M24 15 L48 0 V30Z"/></svg></button>
      <button class="icon-button" type="button" aria-label="Forward"><svg width="48" height="30" viewBox="0 0 48 30" fill="#55bb60"><path d="M24 15 L0 0 V30Z M48 15 L24 0 V30Z"/></svg></button>
    </footer>
  </section>
</div>
</body>
</html>
```
FILE: styles.css
```css
*,
*::before,
*::after {
  box-sizing: border-box;
}

body,
h1, h2, h3, h4, p, ul {
  margin: 0;
  padding: 0;
}

ul {
  list-style: none;
}

a {
  color: inherit;
  text-decoration: none;
}

button,
select {
  font: inherit;
  color: inherit;
}

svg {
  display: block;
  flex: none;
}

body {
  background: #fff;
  color: #021624;
  font-family: "Liberation Sans", Arial, sans-serif;
}

.defs {
  position: absolute;
}

/* App frame: list on the left, page on the right, status bar across both */
.app {
  display: grid;
  grid-template-columns: minmax(0, 750fr) minmax(0, 1298fr);
  grid-template-rows: 40px 1fr;
  min-height: 100vh;
}

.status {
  grid-area: 1 / 1 / 2 / 3;
  z-index: 3;
  display: grid;
  grid-template-columns: 1fr auto 1fr;
  align-items: center;
  padding: 2px 10px 0 12px;
  color: #fff;
  font: 24px/38px Inter, sans-serif;
}

.status-left,
.status-right {
  display: flex;
  align-items: center;
  gap: 10px;
}

.status-right {
  justify-content: flex-end;
  gap: 6px;
}

.clock {
  padding-left: 2px;
  font-weight: 500;
}

.side,
.detail {
  display: flex;
  flex-direction: column;
  min-width: 0;
}

.side {
  grid-area: 1 / 1 / 3 / 2;
}

.detail {
  grid-area: 1 / 2 / 3 / 3;
  border-left: 1px solid #8e8e93;
}

.nav {
  position: relative;
  z-index: 1;
  display: grid;
  grid-template-columns: 1fr auto 1fr;
  align-items: center;
  height: 128px;
  padding: 40px 34px 0 32px;
  background: #693f2e;
  box-shadow: 0 1px #a9a9a9;
  color: #fff;
  font: 32px/40px Inter, sans-serif;
}

.detail .nav {
  padding: 40px 41px 0 40px;
}

.nav-title {
  font-size: 33px;
  font-weight: 600;
}

.nav-shield {
  width: 60px;
  height: 64px;
  justify-self: end;
}

.shield-small {
  fill: #fff;
  font: bold 15px "Liberation Sans", sans-serif;
}

.shield-big {
  fill: #fff;
  stroke: #fff;
  stroke-width: 2px;
  font: 74px "Liberation Serif", serif;
}

.icon-button {
  display: grid;
  place-items: center;
  padding: 0;
  border: 0;
  background: none;
}

.expand {
  justify-self: start;
}

/* Left list */
.menu-link {
  display: flex;
  align-items: center;
  height: 84px;
  padding: 0 30px 0 35px;
  color: #000;
  font: 37px/48px Inter, sans-serif;
}

.menu-item {
  background: linear-gradient(#c8c7cc, #c8c7cc) 30px 100% / 100% 1px no-repeat;
}

.menu-item.is-current {
  background: #d9d9d9;
}

.menu-icon {
  width: 50px;
  height: 50px;
}

.menu-text {
  flex: 1;
  padding-left: 35px;
  white-space: nowrap;
}

.chevron {
  width: 16px;
  height: 26px;
  fill: none;
  stroke: #c7c7cc;
  stroke-width: 3;
}

.menu-rest {
  flex: 1;
  margin-left: 30px;
  background: repeating-linear-gradient(#fff 0 83px, #c8c7cc 83px 84px);
}

/* Web page */
.page {
  flex: 1;
  padding-top: 20px;
  border-right: 1px solid #000;
  overflow: hidden;
}

.brand-bar {
  display: flex;
  background: #fafaee;
}

.burger {
  width: 100px;
  padding: 0;
  border-right: 4px solid #021624;
}

.brand {
  display: flex;
  padding-left: 19px;
}

.brand-mark {
  width: 124px;
  height: 124px;
  margin: -16px 0 2px;
}

.brand-words {
  display: flex;
  flex-direction: column;
  padding-top: 43px;
}

.brand-name {
  font: bold 35px/40px "Liberation Sans", sans-serif;
}

.brand-dot {
  color: #3c7391;
}

.brand-tag {
  padding-left: 14px;
  color: #3c7391;
  font: bold 13px/20px "Liberation Sans", sans-serif;
}

.save-row {
  display: flex;
  justify-content: flex-end;
  align-items: center;
  gap: 32px;
  height: 88px;
  padding-right: 8px;
}

.briefcase {
  width: 36px;
  height: 31px;
  margin-bottom: 10px;
}

.save {
  padding-top: 2px;
  color: #174860;
  font-size: 28px;
  font-weight: bold;
}

.facility {
  padding: 4px 20px 20px;
  background: #000;
  color: #fff;
}

.facility-head {
  display: flex;
  align-items: baseline;
  gap: 26px;
  height: 48px;
  line-height: 48px;
}

.facility-name {
  color: #fdf9ef;
  font-size: 40px;
}

.facility-org {
  color: #96b86b;
  font-size: 32px;
}

.facility-link {
  display: flex;
  align-items: center;
  gap: 12px;
  margin-top: 20px;
  font-size: 24px;
}

.facility-head + .facility-link {
  margin-top: 24px;
}

.round-icon {
  width: 48px;
  height: 48px;
}

.notice {
  position: relative;
  display: flex;
  align-items: center;
  gap: 49px;
  min-height: 172px;
  margin-top: 40px;
  padding: 0 36px 0 50px;
  background: #ffb305;
  color: #231f20;
}

.notice::after {
  content: "";
  position: absolute;
  top: 100%;
  left: 139px;
  border: 30px solid transparent;
  border-top-color: #ffb305;
  border-bottom: 0;
}

.notice-text {
  padding-bottom: 32px;
  font-size: 28px;
  line-height: 40px;
}

.heading {
  display: block;
  font-size: 28px;
  font-weight: bold;
  line-height: 40px;
}

/* The first drop-down runs on under the second one */
.pickers {
  display: flex;
  padding: 60px 20px 20px;
}

.picker {
  flex: 0 0 560px;
  min-width: 0;
}

.select-box {
  position: relative;
  width: 600px;
  height: 64px;
  margin-top: 10px;
  border: 2px solid #4d4d4d;
  border-radius: 10px;
  background: linear-gradient(#fff, #fdfdfd 15%, #cacaca);
  color: #000;
  font-size: 26px;
  overflow: hidden;
}

.select-box::after {
  content: "";
  position: absolute;
  inset: 0 0 0 auto;
  width: 40px;
  border-left: 1px solid #4d4d4d;
  background: linear-gradient(#999, #4f4f4f);
  pointer-events: none;
}

.select-box::before {
  content: "";
  position: absolute;
  z-index: 1;
  top: 23px;
  right: 13px;
  border: 7px solid transparent;
  border-top: 13px solid #fff;
  border-bottom: 0;
  pointer-events: none;
}

.picker:first-child .select-box::before {
  z-index: 0;
}

.select-box select {
  appearance: none;
  width: 100%;
  height: 100%;
  padding: 0 50px 0 12px;
  border: 0;
  background: none;
}

.tabs {
  display: grid;
  grid-template-columns: 1fr 1fr;
}

.tab {
  height: 64px;
  border: 0;
  background: #786653;
  color: #f0eee1;
  font-size: 28px;
  font-weight: bold;
}

.tab.is-active {
  background: #f0eee1;
  color: #7e6755;
}

.body {
  padding: 10px 14px 12px 10px;
}

.about {
  padding-right: 40px;
  font-size: 36px;
  line-height: 72px;
}

.section {
  margin: 6px 0 10px;
}

.address {
  font-size: 28px;
  font-style: normal;
  line-height: 40px;
}

.mail {
  color: #45758b;
  font-weight: bold;
}

/* Map */
.map {
  position: relative;
  margin-top: 50px;
  border: 2px solid #888;
  overflow: hidden;
  font-family: Roboto, sans-serif;
}

.map-art {
  width: 100%;
  height: auto;
}

.stream,
.track,
.road,
.trail {
  fill: none;
  stroke-linejoin: round;
}

.stream path,
.track path,
.road path,
.trail path {
  vector-effect: non-scaling-stroke;
}

.stream {
  stroke: #aadaff;
  stroke-width: 1px;
}

.track {
  stroke: #fff;
  stroke-width: 1px;
}

.road {
  stroke: #fff;
  stroke-width: 3px;
}

.trail {
  stroke: #77c884;
  stroke-width: 2px;
  stroke-dasharray: 6 3;
}

.map-pin {
  position: absolute;
  left: calc(50% - 11px);
  top: calc(50% - 38px);
  width: 38px;
  height: 62px;
}

.map-type,
.map-zoom {
  position: absolute;
  border-radius: 4px;
  background: #fff;
  box-shadow: 0 1px 4px rgba(0, 0, 0, .3);
}

.map-type {
  top: 20px;
  left: 20px;
  width: 231px;
  height: 72px;
}

.map-type select {
  appearance: none;
  width: 100%;
  height: 100%;
  padding: 0 22px;
  border: 0;
  background: none;
  color: #000;
  font-size: 22px;
  font-weight: 500;
}

.map-type::after {
  content: "";
  position: absolute;
  top: 33px;
  right: 12px;
  border: 8px solid transparent;
  border-top-color: #666;
  border-bottom: 0;
  pointer-events: none;
}

.map-zoom {
  right: 20px;
  bottom: 48px;
  width: 56px;
  padding: 0 9px;
}

.map-zoom button {
  display: grid;
  place-items: center;
  width: 100%;
  height: 55px;
  padding: 0;
  border: 0;
  background: none;
}

.map-zoom button + button {
  border-top: 2px solid #e6e6e6;
}

.google {
  position: absolute;
  left: 12px;
  bottom: 4px;
  font: 40px/48px Lato, sans-serif;
  -webkit-text-stroke: 1px currentColor;
  text-shadow: 0 0 3px #fff, 0 0 3px #fff, 0 0 4px #fff;
}

.g-blue { color: #4285f4; }
.g-red { color: #ea4335; }
.g-yellow { color: #fbbc05; }
.g-green { color: #34a853; }

.google span {
  -webkit-text-stroke-color: currentColor;
}

.map-credit {
  position: absolute;
  right: 0;
  bottom: 0;
  display: flex;
  gap: 1px;
  color: #444;
  font-size: 20px;
  line-height: 27px;
}

.map-credit > * {
  padding: 0 11px;
  background: rgba(245, 245, 245, .7);
}

.scale {
  display: flex;
  align-items: center;
  gap: 8px;
}

.map-credit .terms {
  padding: 0 3px 0 20px;
  font-weight: 500;
}

.activities {
  display: grid;
  gap: 28px;
  margin-top: 30px;
}

.activities li {
  display: flex;
  align-items: center;
  gap: 16px;
  font-size: 24px;
}

.activities span {
  padding-top: 16px;
}

.toolbar {
  display: flex;
  align-items: center;
  height: 89px;
  padding: 0 40px;
  border-top: 1px solid #b2b2b2;
  background: #f9f9f9;
}

.reload {
  margin-left: 104px;
}

.back {
  margin: 0 104px 0 auto;
}
```
